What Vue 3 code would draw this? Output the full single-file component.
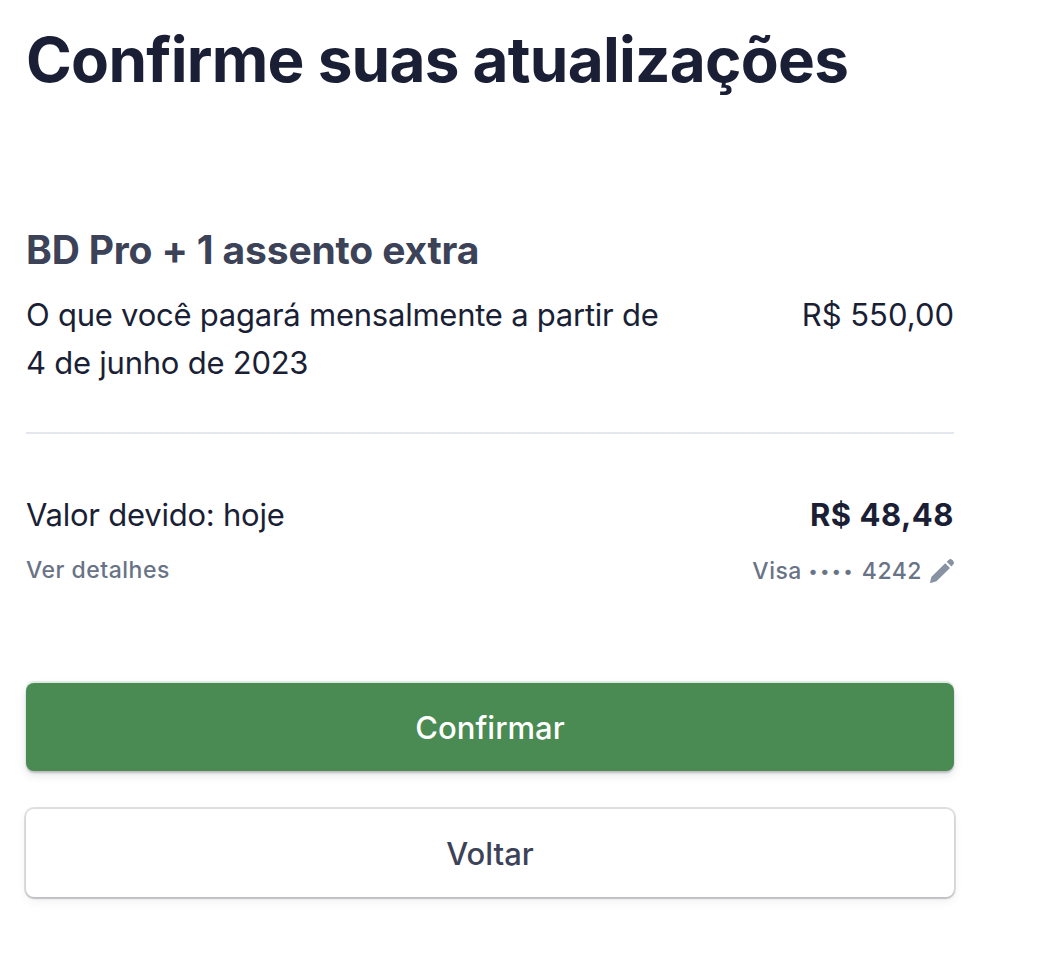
<template>
  <main class="confirm-page">
    <h1>Confirme suas atualizações</h1>

    <section class="plan">
      <h2>{{ plan.name }}</h2>
      <div class="row">
        <p class="description"><span>O que você pagará mensalmente a partir de</span><br /><span>{{ plan.startDate }}</span></p>
        <span class="price">{{ formatCurrency(plan.monthly) }}</span>
      </div>
    </section>

    <section class="due">
      <div class="row">
        <span class="due-label">Valor devido: hoje</span>
        <strong class="total">{{ formatCurrency(plan.dueToday) }}</strong>
      </div>
      <div class="row secondary">
        <a class="details">Ver detalhes</a>
        <a class="card-info">
          <span class="card-number">Visa <span class="dots">••••</span> {{ cardLast4 }}</span>
          <svg class="edit-icon" viewBox="0 0 24 24" aria-hidden="true">
            <path d="M15.2 4.2 20 9 6.7 22.1Q6.3 22.5 5.7 22.6L.8 24Q-.1 24.2.1 23.3L1.2 18.8Q1.3 18.1 1.8 17.6zM16.7 2.7 19.1.6Q20-.3 21.3.3 23 1 23.8 2.9 24.3 4.2 23.4 5.2L21.5 7.5z" />
          </svg>
        </a>
      </div>
    </section>

    <div class="actions">
      <button type="button" class="button primary"><span>Confirmar</span></button>
      <button type="button" class="button"><span>Voltar</span></button>
    </div>
  </main>
</template>

<script setup>
const plan = {
  name: 'BD Pro + 1 assento extra',
  startDate: '4 de junho de 2023',
  monthly: 550,
  dueToday: 48.48,
}
const cardLast4 = '4242'

const formatCurrency = (value) => `R$ ${value.toFixed(2).replace('.', ',')}`
</script>

<style>
body {
  background: #ffffff;
}
</style>

<style scoped>
.confirm-page {
  box-sizing: border-box;
  width: 980px;
  min-height: 980px;
  padding: 20px 26px 0;
  font-family: Inter, sans-serif;
  color: #1a1f36;
}

h1,
h2,
p {
  margin: 0;
}

h1 {
  font-size: 62px;
  line-height: 80px;
  font-weight: 700;
  letter-spacing: -0.75px;
  white-space: nowrap;
}

.plan {
  margin-top: 122px;
  padding-bottom: 45px;
  border-bottom: 2px solid #e3e8ee;
}

h2 {
  font-size: 39px;
  line-height: 56px;
  font-weight: 700;
  letter-spacing: -0.16px;
  color: #3c4257;
}

.row {
  display: flex;
  justify-content: space-between;
  font-size: 31px;
  line-height: 48px;
  white-space: nowrap;
}

.plan .row {
  margin-top: 13px;
}

.description,
.due-label {
  letter-spacing: -0.24px;
}

.due {
  padding-top: 57px;
}

.total {
  font-weight: 700;
  letter-spacing: 0.5px;
}

.secondary {
  margin-top: 14px;
  font-size: 23px;
  line-height: 34px;
  font-weight: 500;
  letter-spacing: 0.5px;
  color: #697386;
}

.card-info {
  display: flex;
  align-items: center;
  gap: 8px;
  height: 36px;
  line-height: 36px;
}

.dots {
  font-size: 17px;
  line-height: 1;
  letter-spacing: 2.6px;
  vertical-align: 2px;
}

.edit-icon {
  width: 24px;
  height: 24px;
  fill: #8792a2;
}

.actions {
  display: grid;
  gap: 38px;
  margin-top: 94px;
}

.button {
  height: 88px;
  padding: 2px 0 0;
  border: 0;
  border-radius: 8px;
  background: #ffffff;
  box-shadow: 0 0 0 2px rgba(60, 66, 87, 0.16), 0 2px 2px rgba(0, 0, 0, 0.12), 0 4px 10px rgba(60, 66, 87, 0.08);
  font: 500 31px/48px Inter, sans-serif;
  color: #3c4257;
}

.primary {
  background: #498b52;
  box-shadow: 0 -2px 1px rgba(73, 139, 82, 0.16), 0 2px 2px rgba(0, 0, 0, 0.2), 0 4px 10px rgba(60, 66, 87, 0.14);
  color: #ffffff;
}
</style>
